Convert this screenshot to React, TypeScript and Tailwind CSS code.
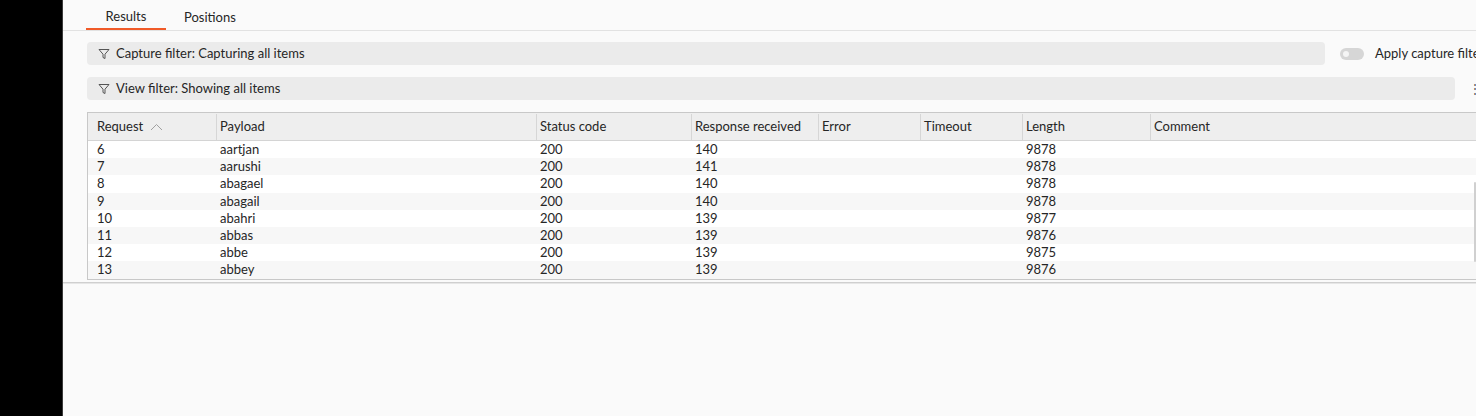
type Row = {
  request: number;
  payload: string;
  status: number;
  received: number;
  length: number;
};

const rows: Row[] = [
  { request: 6, payload: "aartjan", status: 200, received: 140, length: 9878 },
  { request: 7, payload: "aarushi", status: 200, received: 141, length: 9878 },
  { request: 8, payload: "abagael", status: 200, received: 140, length: 9878 },
  { request: 9, payload: "abagail", status: 200, received: 140, length: 9878 },
  { request: 10, payload: "abahri", status: 200, received: 139, length: 9877 },
  { request: 11, payload: "abbas", status: 200, received: 139, length: 9876 },
  { request: 12, payload: "abbe", status: 200, received: 139, length: 9875 },
  { request: 13, payload: "abbey", status: 200, received: 139, length: 9876 },
];

const columns = [
  { label: "Request", width: "w-[129px] pl-[9px]" },
  { label: "Payload", width: "w-[320px] pl-[3px]" },
  { label: "Status code", width: "w-[155px] pl-[3px]" },
  { label: "Response received", width: "w-[127px] pl-[3px]" },
  { label: "Error", width: "w-[102px] pl-[3px]" },
  { label: "Timeout", width: "w-[102px] pl-[3px]" },
  { label: "Length", width: "w-[128px] pl-[3px]" },
  { label: "Comment", width: "flex-1 pl-[3px]" },
];

function Funnel(): React.JSX.Element {
  return (
    <svg width="12" height="12" viewBox="0 0 12 12" fill="none" className="shrink-0">
      <path d="M1 1.5h10L7 6.2V10.5L5 9.5V6.2Z" stroke="#555" strokeWidth="1" strokeLinejoin="round" />
    </svg>
  );
}

function SortUp(): React.JSX.Element {
  return (
    <svg width="13" height="8" viewBox="0 0 13 8" fill="none" className="ml-[1px] shrink-0">
      <path d="M1 7L6.5 1.5L12 7" stroke="#a0a0a0" strokeWidth="1" />
    </svg>
  );
}

function FilterBar({ text, className }: { text: string; className: string }): React.JSX.Element {
  return (
    <div className={`flex h-[23px] shrink-0 items-center gap-[6px] rounded-[4px] bg-[#ebebeb] pl-[11px] ${className}`}>
      <Funnel />
      <span>{text}</span>
    </div>
  );
}

export default function App(): React.JSX.Element {
  return (
    <div className="flex h-[416px] w-[1476px] overflow-hidden font-['Lato','Liberation_Sans',sans-serif] text-[13px] text-[#262626]">
      <div className="w-[62px] shrink-0 bg-black" />
      <div className="flex min-w-0 flex-1 flex-col border-l border-[#3a3a3a] bg-[#fafafa]">
        {/* tabs */}
        <div className="flex h-[31px] shrink-0 items-end border-b border-[#e2e2e2] pl-[23px]">
          <div className="flex h-full w-[80px] items-center justify-center border-b-2 border-[#f05a28] pt-[5px]">
            Results
          </div>
          <div className="flex h-full items-center px-[18px] pt-[5px]">Positions</div>
        </div>

        {/* filters */}
        <div className="mt-[11px] flex items-center pl-[24px]">
          <FilterBar text="Capture filter: Capturing all items" className="w-[1238px]" />
          <div className="ml-[15px] h-[12px] w-[24px] shrink-0 rounded-full bg-[#d6d6d6] p-[3px]">
            <div className="h-[6px] w-[6px] rounded-full bg-[#f5f5f5]" />
          </div>
          <span className="ml-[11px] whitespace-nowrap">Apply capture filter</span>
        </div>
        <div className="mt-[12px] flex items-center pl-[24px]">
          <FilterBar text="View filter: Showing all items" className="w-[1368px]" />
          <span className="ml-[14px] text-[12px] leading-none text-[#555]">⋮</span>
        </div>

        {/* table */}
        <div className="mt-[12px] ml-[24px] w-[1420px] border border-[#c8c8c8] bg-white">
          <div className="flex h-[28px] border-b border-[#d4d4d4] bg-[#eeeeee] pt-[1px]">
            {columns.map((col) => (
              <div
                key={col.label}
                className={`flex items-center gap-[6px] border-r border-[#d6d6d6] ${col.width}`}
              >
                <span>{col.label}</span>
                {col.label === "Request" && <SortUp />}
              </div>
            ))}
          </div>
          <div className="relative">
            {rows.map((row, i) => (
              <div
                key={row.request}
                className={`flex h-[17.2px] items-center leading-none ${i % 2 === 1 ? "bg-[#f7f7f7]" : "bg-white"}`}
              >
                <div className="w-[129px] pl-[9px]">{row.request}</div>
                <div className="w-[320px] pl-[3px]">{row.payload}</div>
                <div className="w-[155px] pl-[3px]">{row.status}</div>
                <div className="w-[127px] pl-[3px]">{row.received}</div>
                <div className="w-[102px]" />
                <div className="w-[102px]" />
                <div className="w-[128px] pl-[3px]">{row.length}</div>
                <div className="flex-1" />
              </div>
            ))}
            <div className="absolute top-[41px] left-[1386px] h-[80px] w-[2px] rounded bg-[#d0d0d0]" />
          </div>
        </div>
        <div className="mt-[2px] h-[2px] border-t border-[#cfcfcf] bg-[#e6e6e6]" />
        <div className="flex-1 bg-[#fafafa]" />
      </div>
    </div>
  );
}
